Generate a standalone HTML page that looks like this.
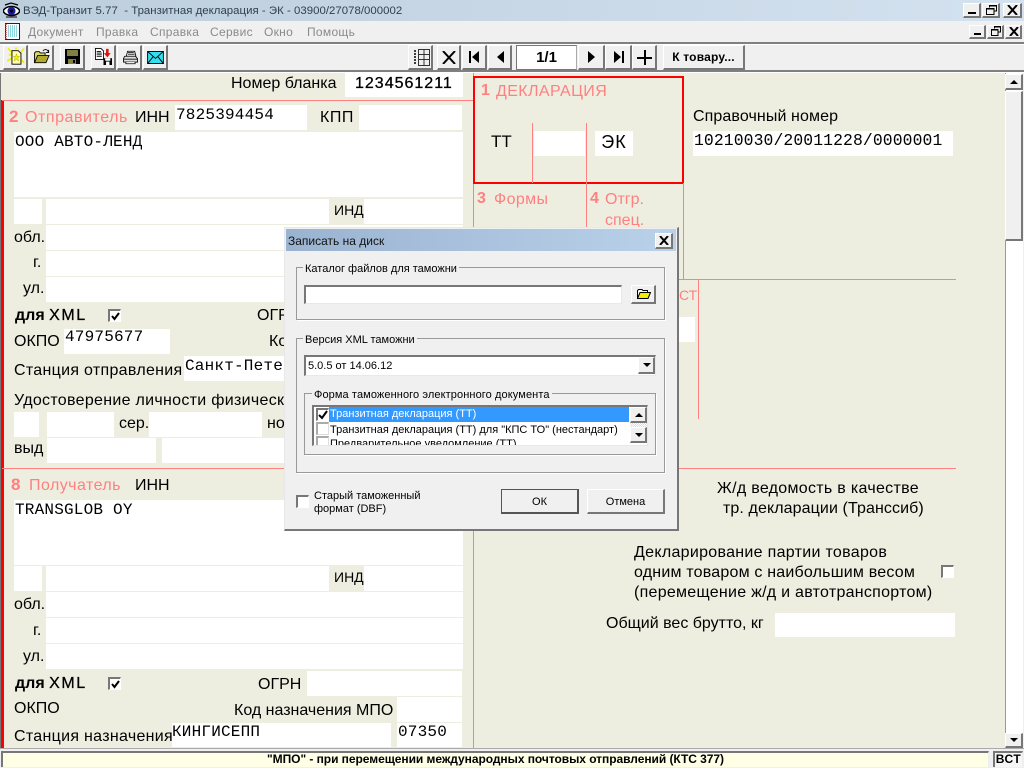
<!DOCTYPE html>
<html lang="ru"><head><meta charset="utf-8"><title>ВЭД-Транзит 5.77</title>
<style>
html,body{margin:0;padding:0}
body{width:1024px;height:768px;overflow:hidden;position:relative;background:#f0f0f0;font:16px/20px "Liberation Sans",sans-serif;color:#000}
div,span,svg{position:absolute;white-space:pre;box-sizing:border-box}
.w{background:#fff}
.p{color:#ff8080}
.n{font-weight:bold;color:#ff8080}
.l{background:#ff8080}
.m{font:16px/20px "Liberation Mono",monospace;letter-spacing:.2px;height:20px}
.b{background:#f0f0f0;border:1px solid;border-color:#fff #777 #777 #fff;border-width:1px 2px 2px 1px}
.s{font-size:11px;line-height:14px}
.mn{top:24px;font-size:12px;line-height:16px;color:#8a8a8a;letter-spacing:.3px}
.g{border:1px solid #999;box-shadow:1px 1px 0 #fff}
.lg{background:#f0f0f0;padding:0 2px;font-size:11px;line-height:14px}
.chk{width:13px;height:13px;background:#fff;border:1px solid;border-color:#777 #fff #fff #777;border-width:2px 1px 1px 2px}
.t{letter-spacing:.3px}
</style></head><body>
<div style="left:0;top:0;width:1024px;height:21px;background:linear-gradient(90deg,#bccddc,#d4e2f0)"></div>
<svg style="left:3px;top:2px" width="17" height="17" viewBox="0 0 17 17"><path d="M0 9C3 3 14 3 17 9C14 15 3 15 0 9Z" fill="#fff" stroke="#000" stroke-width="1.6"/><path d="M2 3L8 1L15 3" fill="none" stroke="#000" stroke-width="1.3"/><circle cx="8.500" cy="9" r="4" fill="#1a1a9a"/><circle cx="8.500" cy="9" r="1.500" fill="#000"/><path d="M3 15L14 15" stroke="#000"/></svg>
<div style="left:23px;top:3px;color:#2f3f4f;font-size:11.4px;line-height:16px;letter-spacing:.03px">ВЭД-Транзит 5.77  - Транзитная декларация - ЭК - 03900/27078/000002</div>
<div class="b" style="left:963px;top:3px;width:18px;height:15px"><span style="left:4px;top:8px;width:8px;height:2px;background:#000"></span></div>
<div class="b" style="left:982px;top:3px;width:18px;height:15px"><svg style="left:3px;top:1px" width="11" height="10" viewBox="0 0 11 10"><path d="M3.500 2.500V.5H10.500V6H8M.5 3.500H8V9.500H.5Z" fill="none" stroke="#000"/><path d="M3 1H11M0 4H8" stroke="#000"/></svg></div>
<div class="b" style="left:1003px;top:3px;width:19px;height:15px"><svg style="left:3px;top:1px" width="11" height="10"><path d="M1 0L10 10M10 0L1 10" stroke="#000" stroke-width="2"/></svg></div>

<div style="left:0;top:21px;width:1024px;height:21px;background:#f0f0f0"></div>
<svg style="left:5px;top:23px" width="15" height="17" viewBox="0 0 15 17"><rect x=".5" y=".5" width="14" height="16" fill="#fff" stroke="#223"/><path d="M3 3H13M3 5H13M3 7H13M3 9H13M3 11H13M3 13H13" stroke="#20b0c0" stroke-dasharray="1 1"/><path d="M1 1V16" stroke="#d04040" stroke-width="1.500" stroke-dasharray="1 1"/></svg>
<span class="mn" style="left:28px">Документ</span><span class="mn" style="left:96px">Правка</span><span class="mn" style="left:150px">Справка</span><span class="mn" style="left:210px">Сервис</span><span class="mn" style="left:264px">Окно</span><span class="mn" style="left:307px">Помощь</span>
<div class="b" style="left:969px;top:25px;width:17px;height:14px"><span style="left:4px;top:7px;width:7px;height:2px;background:#000"></span></div>
<div class="b" style="left:987px;top:25px;width:17px;height:14px"><svg style="left:3px;top:0" width="10" height="10" viewBox="0 0 10 10"><path d="M3.500 2.500V.5H9.500V6H7.500M.5 3.500H7V9.500H.5Z" fill="none" stroke="#000"/><path d="M3 1H10M0 4H7" stroke="#000"/></svg></div>
<div class="b" style="left:1005px;top:25px;width:17px;height:14px"><svg style="left:3px;top:1px" width="10" height="9"><path d="M1 0L9 9M9 0L1 9" stroke="#000" stroke-width="2"/></svg></div>

<div style="left:0;top:42px;width:1024px;height:2px;background:#808080"></div>
<div style="left:0;top:44px;width:1024px;height:1px;background:#fff"></div>
<div style="left:0;top:70px;width:1024px;height:2px;background:#808080"></div>
<div style="left:0;top:72px;width:1024px;height:1px;background:#fff"></div>

<div class="b" style="left:3px;top:45px;width:25px;height:25px"><svg style="left:3px;top:1px" width="18" height="19" viewBox="0 0 20 20"><path d="M1 1L6 6M19 1L15 6M0 15L5 12M19 17L15 13M2 8H5M10 0V2" stroke="#f0f000" stroke-width="2"/><path d="M5.500 3.500H12.500L15.500 6.500V18.500H5.500Z" fill="#ffffb0" stroke="#000"/><path d="M10.500 7L11.500 10H14L12 12L13 15L10.500 13L8 15L9 12L7 10H9.500Z" fill="#f0f000" stroke="#b0a000" stroke-width=".5"/></svg></div>
<div class="b" style="left:29px;top:45px;width:25px;height:25px"><svg style="left:3px;top:3px" width="18" height="15" viewBox="0 0 18 17"><path d="M.5 15.500V4.500L2 3H6L7 4.500H12.500V7" fill="#d8d860" stroke="#000"/><path d="M.5 15.500L4 7.500H17L13.500 15.500Z" fill="#b0a830" stroke="#000"/><path d="M10 2C12 0 15 0 16 3M16.500 1V4H13.500" fill="none" stroke="#000"/></svg></div>
<div class="b" style="left:60px;top:45px;width:25px;height:25px"><svg style="left:4px;top:3px" width="15" height="15" viewBox="0 0 15 15"><rect width="15" height="15" fill="#000"/><rect x="2" y="1" width="11" height="6" fill="#808040"/><rect x="3" y="10" width="8" height="5" fill="#808040"/><rect x="8" y="11" width="2" height="3" fill="#000"/></svg></div>
<div class="b" style="left:91px;top:45px;width:25px;height:25px"><svg style="left:3px;top:2px" width="17" height="17" viewBox="0 0 20 20"><path d="M.5 .5H7L10 3.500V13.500H.5Z" fill="#fff" stroke="#000"/><path d="M2 4H7M2 6H8M2 8H8M2 10H8" stroke="#000"/><path d="M13 1H16V6H18.500L14.500 11L10.500 6H13Z" fill="#e01010"/><rect x="10" y="12" width="10" height="8" fill="#000"/><rect x="12" y="12" width="6" height="3" fill="#fff"/><rect x="13" y="16" width="4" height="4" fill="#fff"/></svg></div>
<div class="b" style="left:117px;top:45px;width:25px;height:25px"><svg style="left:4px;top:4px" width="17" height="15" viewBox="0 0 18 18"><path d="M5.500 1.500H14L15.500 7.500H4Z" fill="#fff" stroke="#000"/><path d="M6 3H13M6 5H14" stroke="#000"/><path d="M2 7.500H15L17.500 10.500V14.500H.5V10.500Z" fill="#ddd" stroke="#000"/><path d="M1 11H17" stroke="#000"/><path d="M3.500 14.500V16.500H14.500V14.500" fill="#fff" stroke="#000"/></svg></div>
<div class="b" style="left:143px;top:45px;width:25px;height:25px"><svg style="left:3px;top:5px" width="17" height="13" viewBox="0 0 18 14"><rect x=".5" y=".5" width="17" height="13" fill="#30e0f0" stroke="#000"/><path d="M.5 .5L9 8L17.500 .5M.5 13.500L6.500 6M17.500 13.500L11.500 6" fill="none" stroke="#000"/></svg></div>

<div class="b" style="left:408px;top:45px;width:25px;height:25px"><svg style="left:4px;top:3px" width="17" height="17" viewBox="0 0 17 17"><path d="M5.500 .5H16.500V16.500H5.500ZM11 0V17M5 5.500H17M5 10.500H17" fill="none" stroke="#333"/><path d="M1 2H3M1 5H3M1 8H3M1 11H3M1 14H3" stroke="#000" stroke-width="1.500"/></svg></div>
<div class="b" style="left:437px;top:45px;width:24px;height:25px"><svg style="left:4px;top:5px" width="14" height="13"><path d="M1 0L13 13M13 0L1 13" stroke="#000" stroke-width="2"/></svg></div>
<div class="b" style="left:462px;top:45px;width:25px;height:25px"><svg style="left:6px;top:5px" width="11" height="12"><path d="M0 0H2V12H0ZM10 0V12L3 6Z" fill="#000"/></svg></div>
<div class="b" style="left:488px;top:45px;width:24px;height:25px"><svg style="left:8px;top:5px" width="7" height="12"><path d="M7 0V12L0 6Z" fill="#000"/></svg></div>
<div style="left:516px;top:45px;width:61px;height:25px;background:#fff;border:1px solid;border-color:#777 #aaa #777 #777;text-align:center;font:bold 15px/24px 'Liberation Sans',sans-serif">1/1</div>
<div class="b" style="left:578px;top:45px;width:27px;height:25px"><svg style="left:9px;top:5px" width="7" height="12"><path d="M0 0V12L7 6Z" fill="#000"/></svg></div>
<div class="b" style="left:605px;top:45px;width:27px;height:25px"><svg style="left:8px;top:5px" width="11" height="12"><path d="M0 0V12L7 6ZM8 0H10V12H8Z" fill="#000"/></svg></div>
<div class="b" style="left:632px;top:45px;width:25px;height:25px"><svg style="left:4px;top:4px" width="15" height="15"><path d="M0 7H15V9H0ZM7 0H9V15H7Z" fill="#000"/></svg></div>
<div class="b" style="left:663px;top:45px;width:82px;height:25px;text-align:center;font:bold 12px/22px 'Liberation Sans',sans-serif;letter-spacing:.2px">К товару...</div>

<div style="left:0;top:73px;width:1005px;height:675px;background:#eeeee0;overflow:hidden;border-left:1px solid #777">
<div style="left:0;top:27px;width:3px;height:648px;background:#ff0000"></div>
</div>
<div class="l" style="left:2px;top:100px;width:471px;height:1px"></div>
<div class="l" style="left:473px;top:73px;width:1px;height:675px"></div>
<div class="l" style="left:2px;top:468px;width:471px;height:1px"></div>

<div style="left:231px;top:74px">Номер бланка</div>
<div class="w" style="left:345px;top:73px;width:118px;height:24px;font:16px/22px 'Liberation Sans',sans-serif;padding-left:10px;letter-spacing:1px;-webkit-text-stroke:.3px #000">1234561211</div>

<div class="n" style="left:9px;top:107px;font-size:17px">2</div><div class="p" style="left:25px;top:108px;letter-spacing:.55px">Отправитель</div>
<div style="left:135px;top:108px">ИНН</div>
<div class="w" style="left:175px;top:105px;width:132px;height:25px"></div><div class="m" style="left:176px;top:105px">7825394454</div>
<div style="left:320px;top:108px;letter-spacing:.5px">КПП</div>
<div class="w" style="left:359px;top:105px;width:103px;height:25px"></div>
<div class="w" style="left:14px;top:132px;width:449px;height:65px"></div><div class="m" style="left:15px;top:132px">ООО АВТО-ЛЕНД</div>
<div class="w" style="left:14px;top:199px;width:28px;height:25px"></div>
<div class="w" style="left:46px;top:199px;width:283px;height:25px"></div>
<div style="left:334px;top:200px;font-size:14px">ИНД</div>
<div class="w" style="left:364px;top:199px;width:99px;height:25px"></div>
<div style="left:14px;top:228px">обл.</div><div class="w" style="left:46px;top:225px;width:417px;height:25px"></div>
<div style="left:33px;top:253px">г.</div><div class="w" style="left:46px;top:251px;width:417px;height:25px"></div>
<div style="left:23px;top:279px">ул.</div><div class="w" style="left:46px;top:277px;width:417px;height:25px"></div>
<div style="left:15px;top:306px;font-weight:bold">для <span style="position:static;font-weight:normal;letter-spacing:1.6px;-webkit-text-stroke:.3px #000">XML</span></div>
<div class="chk" style="left:108px;top:309px"><svg style="left:1px;top:1px" width="9" height="9"><path d="M1 4L3.500 7L8 1" fill="none" stroke="#000" stroke-width="2"/></svg></div>
<div style="left:257px;top:306px">ОГРН</div>
<div style="left:14px;top:332px">ОКПО</div>
<div class="w" style="left:64px;top:329px;width:106px;height:25px"></div><div class="m" style="left:65px;top:327px">47975677</div>
<div style="left:269px;top:332px">Код</div>
<div class="t" style="left:14px;top:361px">Станция отправления</div>
<div class="w" style="left:184px;top:356px;width:110px;height:25px"></div><div class="m" style="left:185px;top:356px">Санкт-Петербург</div>
<div style="left:14px;top:391px;letter-spacing:.3px">Удостоверение личности физического</div>
<div class="w" style="left:14px;top:412px;width:25px;height:25px"></div>
<div class="w" style="left:47px;top:412px;width:67px;height:25px"></div>
<div style="left:119px;top:414px">сер.</div>
<div class="w" style="left:149px;top:412px;width:113px;height:25px"></div>
<div style="left:267px;top:414px">номер</div>
<div style="left:14px;top:439px">выд</div>
<div class="w" style="left:47px;top:438px;width:109px;height:25px"></div>
<div class="w" style="left:162px;top:438px;width:301px;height:25px"></div>

<div class="n" style="left:11px;top:475px;font-size:17px">8</div><div class="p" style="left:29px;top:476px;letter-spacing:.45px">Получатель</div>
<div style="left:135px;top:476px">ИНН</div>
<div class="w" style="left:14px;top:500px;width:449px;height:65px"></div><div class="m" style="left:15px;top:500px">TRANSGLOB OY</div>
<div class="w" style="left:14px;top:566px;width:28px;height:25px"></div>
<div class="w" style="left:46px;top:566px;width:283px;height:25px"></div>
<div style="left:334px;top:567px;font-size:14px">ИНД</div>
<div class="w" style="left:364px;top:566px;width:99px;height:25px"></div>
<div style="left:14px;top:595px">обл.</div><div class="w" style="left:46px;top:592px;width:417px;height:25px"></div>
<div style="left:33px;top:621px">г.</div><div class="w" style="left:46px;top:618px;width:417px;height:25px"></div>
<div style="left:23px;top:647px">ул.</div><div class="w" style="left:46px;top:644px;width:417px;height:25px"></div>
<div style="left:15px;top:674px;font-weight:bold">для <span style="position:static;font-weight:normal;letter-spacing:1.6px;-webkit-text-stroke:.3px #000">XML</span></div>
<div class="chk" style="left:108px;top:677px"><svg style="left:1px;top:1px" width="9" height="9"><path d="M1 4L3.500 7L8 1" fill="none" stroke="#000" stroke-width="2"/></svg></div>
<div style="left:258px;top:675px">ОГРН</div>
<div class="w" style="left:307px;top:671px;width:155px;height:25px"></div>
<div style="left:14px;top:699px">ОКПО</div>
<div style="left:234px;top:701px">Код назначения МПО</div>
<div class="w" style="left:397px;top:697px;width:65px;height:25px"></div>
<div class="t" style="left:14px;top:727px">Станция назначения</div>
<div class="w" style="left:172px;top:723px;width:219px;height:24px"></div><div class="m" style="left:172px;top:722px">КИНГИСЕПП</div>
<div class="w" style="left:397px;top:723px;width:65px;height:24px"></div><div class="m" style="left:398px;top:722px">07350</div>

<div style="left:473px;top:76px;width:211px;height:108px;border:2px solid #ff0000"></div>
<div class="n" style="left:481px;top:81px">1</div><div class="p" style="left:496px;top:82px;letter-spacing:.4px">ДЕКЛАРАЦИЯ</div>
<div style="left:491px;top:132px;font-size:17px">ТТ</div>
<div class="l" style="left:532px;top:123px;width:1px;height:60px"></div>
<div class="l" style="left:586px;top:123px;width:1px;height:105px"></div>
<div class="w" style="left:534px;top:131px;width:51px;height:25px"></div>
<div class="w" style="left:595px;top:131px;width:38px;height:25px;text-align:center;font-size:18px;line-height:22px;letter-spacing:1px">ЭК</div>
<div class="n" style="left:477px;top:189px">3</div><div class="p" style="left:494px;top:190px;letter-spacing:.4px">Формы</div>
<div class="n" style="left:590px;top:189px">4</div><div class="p" style="left:605px;top:190px">Отгр.</div>
<div class="p" style="left:605px;top:211px">спец.</div>
<div class="l" style="left:683px;top:183px;width:1px;height:97px"></div>
<div style="left:693px;top:107px;letter-spacing:.1px">Справочный номер</div>
<div class="w" style="left:693px;top:131px;width:260px;height:25px"></div><div class="m" style="left:694px;top:131px;letter-spacing:.1px;font-size:16.4px">10210030/20011228/0000001</div>
<div class="l" style="left:473px;top:279px;width:483px;height:1px"></div>
<div class="p" style="left:679px;top:285px;font-size:14px">СТ</div>
<div class="w" style="left:660px;top:317px;width:35px;height:25px"></div>
<div class="l" style="left:698px;top:279px;width:1px;height:140px"></div>
<div class="l" style="left:473px;top:468px;width:483px;height:1px"></div>
<div class="t" style="left:717px;top:479px">Ж/д ведомость в качестве</div>
<div style="left:723px;top:499px;letter-spacing:.1px">тр. декларации (Транссиб)</div>
<div class="t" style="left:634px;top:543px">Декларирование партии товаров</div>
<div class="t" style="left:634px;top:563px;letter-spacing:.2px">одним товаром с наибольшим весом</div>
<div class="t" style="left:634px;top:583px;letter-spacing:.27px">(перемещение ж/д и автотранспортом)</div>
<div class="chk" style="left:941px;top:565px"></div>
<div style="left:606px;top:614px">Общий вес брутто, кг</div>
<div class="w" style="left:775px;top:613px;width:180px;height:24px"></div>

<div style="left:1005px;top:73px;width:18px;height:675px;background:#fff;border-left:1px solid #999"></div>
<div class="b" style="left:1005px;top:74px;width:18px;height:16px"><svg style="left:4px;top:4px" width="8" height="5"><path d="M0 5H8L4 1Z" fill="#000"/></svg></div>
<div class="b" style="left:1005px;top:91px;width:18px;height:150px"></div>
<div class="b" style="left:1005px;top:733px;width:18px;height:15px"><svg style="left:4px;top:4px" width="8" height="5"><path d="M0 0H8L4 4Z" fill="#000"/></svg></div>

<div style="left:0;top:748px;width:1024px;height:20px;background:#f0f0f0"></div>
<div style="left:0;top:748px;width:1024px;height:1px;background:#aaa"></div>
<div style="left:1px;top:751px;width:988px;height:16px;background:#ffffe6;border:1px solid;border-color:#777 #eee #eee #777;border-width:2px 1px 0 2px;text-align:center;font:bold 12px/13px 'Liberation Sans',sans-serif;letter-spacing:-.05px">"МПО" - при перемещении международных почтовых отправлений (КТС 377)</div>
<div style="left:993px;top:751px;width:30px;height:16px;background:#f6f6f6;border:1px solid;border-color:#777 #eee #eee #777;border-width:2px 1px 0 2px;text-align:center;font:bold 12px/13px 'Liberation Sans',sans-serif;letter-spacing:.5px">ВСТ</div>

<div style="left:284px;top:227px;width:395px;height:304px;background:#f0f0f0;border:1px solid;border-color:#e8e8e8 #777 #777 #e8e8e8;border-width:1px 2px 2px 1px"></div>
<div style="left:286px;top:229px;width:390px;height:22px;background:linear-gradient(90deg,#9ab3d0,#bad1ea)"></div>
<div style="left:288px;top:234px;font-size:12px;line-height:14px;color:#111">Записать на диск</div>
<div class="b" style="left:655px;top:233px;width:18px;height:16px"><svg style="left:3px;top:2px" width="10" height="9"><path d="M1 0L9 9M9 0L1 9" stroke="#000" stroke-width="2"/></svg></div>

<div class="g" style="left:296px;top:267px;width:369px;height:53px"></div>
<div class="lg" style="left:303px;top:262px">Каталог файлов для таможни</div>
<div style="left:304px;top:285px;width:318px;height:19px;background:#fff;border:1px solid;border-color:#777 #e8e8e8 #e8e8e8 #777;border-width:2px 1px 1px 2px"></div>
<div class="b" style="left:631px;top:285px;width:25px;height:19px"><svg style="left:5px;top:2px" width="14" height="12" viewBox="0 0 14 12"><path d="M.5 10.500V2.500L1.500 1.500H5L6 2.500H10.500V4.500" fill="#fff" stroke="#000"/><path d="M.5 10.500L3 4.500H13.500L11 10.500Z" fill="#f0f000" stroke="#000"/></svg></div>

<div class="g" style="left:296px;top:338px;width:369px;height:135px"></div>
<div class="lg" style="left:303px;top:333px">Версия XML таможни</div>
<div style="left:304px;top:355px;width:352px;height:21px;background:#fff;border:1px solid;border-color:#777 #e8e8e8 #e8e8e8 #777;border-width:2px 1px 1px 2px;font-size:11px;line-height:19px;padding-left:2px">5.0.5 от 14.06.12</div>
<div class="b" style="left:638px;top:357px;width:17px;height:17px"><svg style="left:4px;top:5px" width="8" height="5"><path d="M0 0H8L4 4Z" fill="#000"/></svg></div>

<div class="g" style="left:304px;top:393px;width:352px;height:62px"></div>
<div class="lg" style="left:312px;top:388px;letter-spacing:.1px">Форма таможенного электронного документа</div>
<div style="left:312px;top:405px;width:336px;height:41px;background:#fff;border:1px solid;border-color:#777 #e8e8e8 #e8e8e8 #777;border-width:2px 1px 1px 2px;overflow:hidden">
<div style="left:15px;top:0;width:300px;height:15px;background:#3399ff"></div>
<div class="chk" style="left:2px;top:1px"><svg style="left:0;top:0" width="10" height="10"><path d="M1 5L4 8L9 1" fill="none" stroke="#000" stroke-width="2"/></svg></div>
<div class="s" style="left:16px;top:0;color:#fff">Транзитная декларация (ТТ)</div>
<div class="chk" style="left:2px;top:15px;border-color:#aaa #ddd #ddd #aaa"></div>
<div class="s" style="left:16px;top:16px">Транзитная декларация (ТТ) для "КПС ТО" (нестандарт)</div>
<div class="chk" style="left:2px;top:29px;border-color:#aaa #ddd #ddd #aaa"></div>
<div class="s" style="left:16px;top:30px">Предварительное уведомление (ТТ)</div>
</div>
<div class="b" style="left:630px;top:407px;width:17px;height:16px"><svg style="left:4px;top:4px" width="8" height="5"><path d="M0 5H8L4 1Z" fill="#000"/></svg></div>
<div style="left:630px;top:423px;width:17px;height:4px;background:repeating-conic-gradient(#fff 0 25%,#ddd 0 50%) 0 0/2px 2px"></div>
<div class="b" style="left:630px;top:427px;width:17px;height:16px"><svg style="left:4px;top:5px" width="8" height="5"><path d="M0 0H8L4 4Z" fill="#000"/></svg></div>

<div class="chk" style="left:296px;top:495px"></div>
<div class="s" style="left:314px;top:489px">Старый таможенный</div>
<div class="s" style="left:314px;top:502px">формат (DBF)</div>
<div style="left:501px;top:489px;width:78px;height:25px;background:#f0f0f0;border:1px solid #555;border-width:1px 2px 2px 1px;text-align:center;font-size:11px;line-height:24px">ОК</div>
<div class="b" style="left:587px;top:489px;width:78px;height:25px;text-align:center;font-size:11px;line-height:24px">Отмена</div>
</body></html>
